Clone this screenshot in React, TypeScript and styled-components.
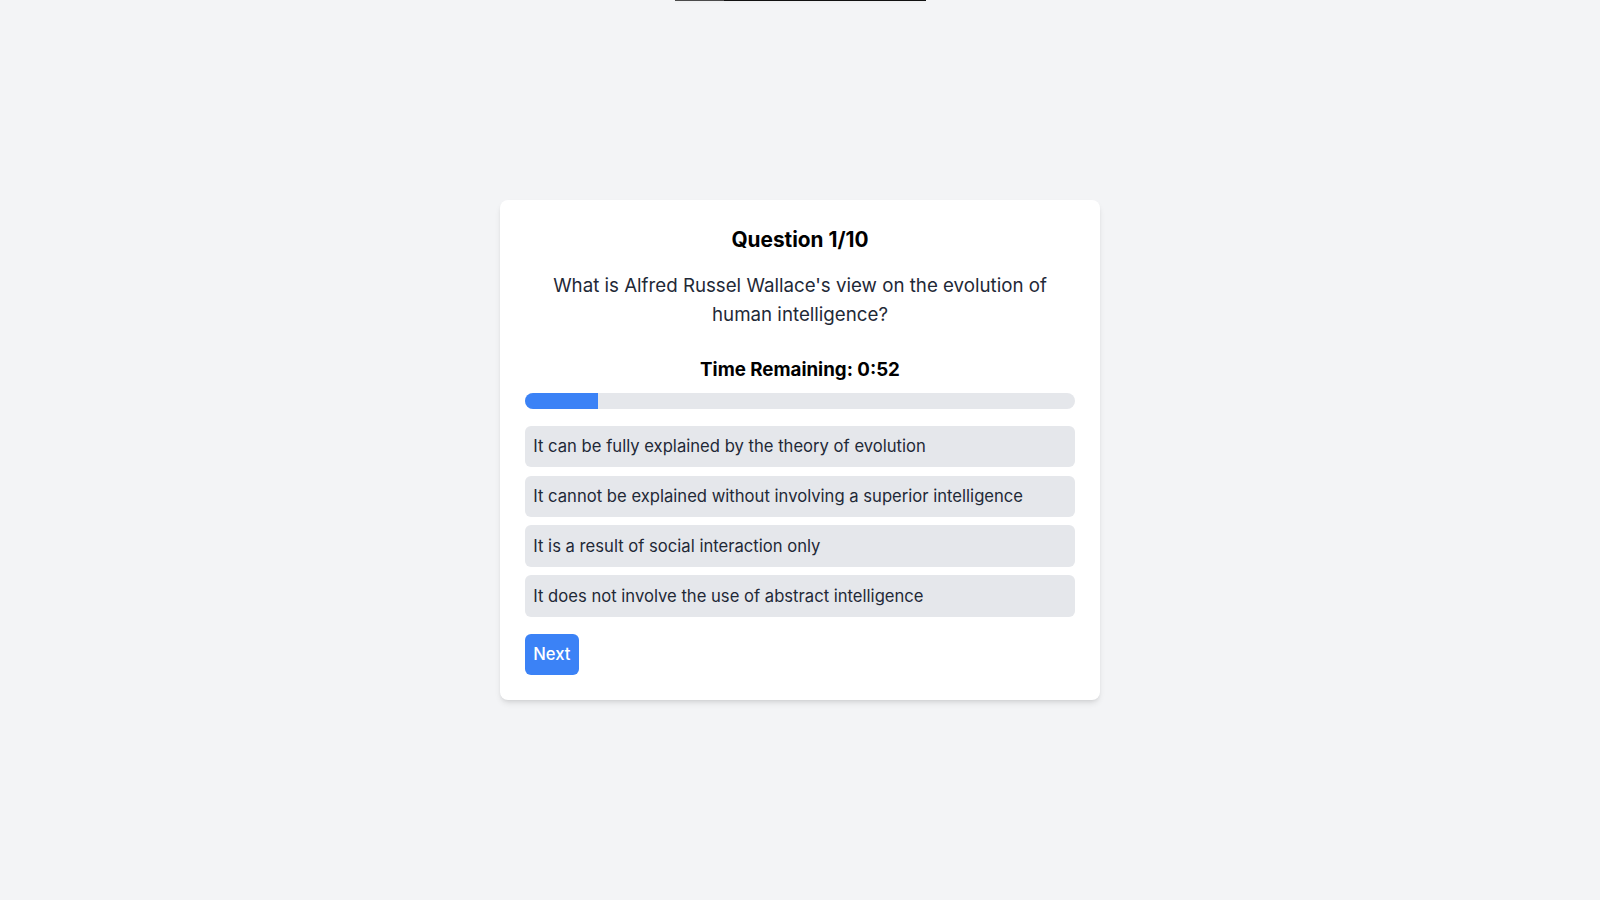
import styled, { createGlobalStyle } from 'styled-components';

// the reference is a 104% zoom of a tailwind-ish layout, so sizes are scaled by hand
const GlobalStyle = createGlobalStyle`
	* {
		box-sizing: border-box;
	}
	body {
		margin: 0;
		background: #f3f4f6;
		font-family: Inter, 'Noto Sans', 'Liberation Sans', sans-serif;
		color: #1f2937;
	}
`;

const Page = styled.div`
	min-height: 100vh;
	display: flex;
	flex-direction: column;
	align-items: center;
`;

const TopStrip = styled.div`
	display: flex;
	width: 251px;
	height: 1px;
	margin-bottom: -1px;
	box-shadow: 0 1px 3px rgba(0, 0, 0, 0.06);
`;

const StripPart = styled.div<{ $w: number; $color: string }>`
	width: ${(p) => p.$w}px;
	background: ${(p) => p.$color};
`;

const Main = styled.main`
	flex: 1;
	width: 100%;
	display: flex;
	align-items: center;
	justify-content: center;
`;

const Card = styled.div`
	width: 600px;
	padding: 25px;
	background: #fff;
	border-radius: 8px;
	box-shadow: 0 4px 6px -1px rgba(0, 0, 0, 0.1), 0 2px 4px -2px rgba(0, 0, 0, 0.1);
	display: flex;
	flex-direction: column;
`;

const Title = styled.h2`
	margin: 0 0 17.4px;
	font-size: 20.8px;
	line-height: 29.1px;
	font-weight: 700;
	text-align: center;
	color: #000;
`;

const QuestionText = styled.p`
	margin: 0 0 25.4px;
	font-size: 18.72px;
	line-height: 29.1px;
	text-align: center;
	color: #1f2937;
`;

const Timer = styled.div`
	margin-bottom: 8.5px;
	font-size: 18.72px;
	line-height: 29.1px;
	font-weight: 700;
	text-align: center;
	color: #000;
`;

const Track = styled.div`
	height: 16.6px;
	border-radius: 9999px;
	background: #e5e7eb;
	overflow: hidden;
	margin-bottom: 16.6px;
`;

const Fill = styled.div`
	height: 100%;
	background: #3b82f6;
`;

const Options = styled.div`
	display: flex;
	flex-direction: column;
	gap: 8.3px;
	margin-bottom: 16.6px;
`;

const Option = styled.button`
	display: block;
	width: 100%;
	height: 41.6px;
	padding: 0 8.3px;
	border: none;
	border-radius: 6px;
	background: #e5e7eb;
	font-family: inherit;
	font-size: 16.64px;
	line-height: 25px;
	color: #1f2937;
	text-align: left;
	cursor: pointer;
`;

const NextButton = styled.button`
	align-self: flex-start;
	height: 41.6px;
	padding: 0 8.3px;
	border: none;
	border-radius: 6px;
	background: #3b82f6;
	color: #fff;
	font-family: inherit;
	font-size: 16.64px;
	font-weight: 500;
	cursor: pointer;
`;

const options = [
	'It can be fully explained by the theory of evolution',
	'It cannot be explained without involving a superior intelligence',
	'It is a result of social interaction only',
	'It does not involve the use of abstract intelligence',
];

const total = 60;
const remaining = 52;

function App() {
	const elapsed = ((total - remaining) / total) * 100;

	return (
		<>
			<GlobalStyle />
			<Page>
				<TopStrip>
					<StripPart $w={49} $color="#4b4b4b" />
					<StripPart $w={202} $color="#111" />
				</TopStrip>
				<Main>
					<Card>
						<Title>Question 1/10</Title>
						<QuestionText>
							What is Alfred Russel Wallace's view on the evolution of human intelligence?
						</QuestionText>
						<Timer>Time Remaining: 0:52</Timer>
						<Track>
							<Fill style={{ width: `${elapsed}%` }} />
						</Track>
						<Options>
							{options.map((o) => (
								<Option key={o}>{o}</Option>
							))}
						</Options>
						<NextButton>Next</NextButton>
					</Card>
				</Main>
			</Page>
		</>
	);
}

export default App;
